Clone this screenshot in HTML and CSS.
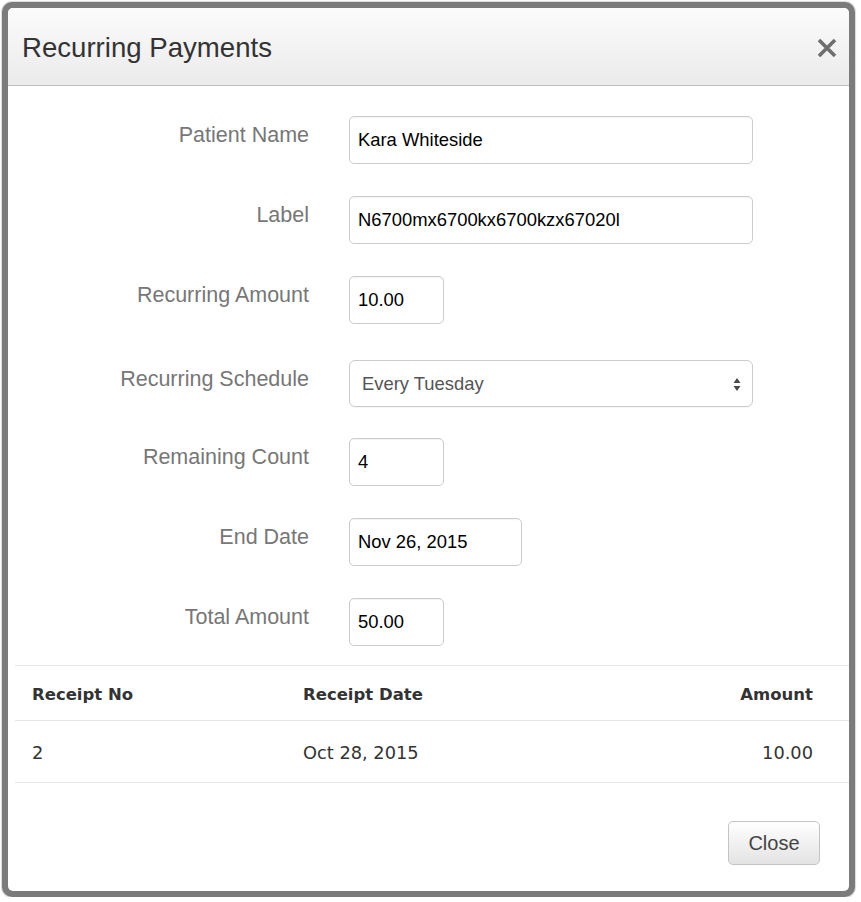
FILE: index.html
```html
<!DOCTYPE html>
<html>
<head>
<meta charset="utf-8">
<title>Recurring Payments</title>
<link rel="stylesheet" href="styles.css">
</head>
<body>
<div class="modal">
  <div class="modal-content">
    <div class="modal-header">
      <h4 class="modal-title">Recurring Payments</h4>
      <button class="close" type="button" aria-label="Close">
        <svg width="20" height="20" viewBox="0 0 20 20"><path d="M2 2 L18 18 M18 2 L2 18" stroke="#6e6e6e" stroke-width="3.6" stroke-linecap="butt"/></svg>
      </button>
    </div>
    <div class="modal-body">
      <div class="form">
        <div class="form-row">
          <label class="form-label">Patient Name</label>
          <div class="control w-full">Kara Whiteside</div>
        </div>
        <div class="form-row">
          <label class="form-label">Label</label>
          <div class="control w-full">N6700mx6700kx6700kzx67020l</div>
        </div>
        <div class="form-row">
          <label class="form-label">Recurring Amount</label>
          <div class="control w-small">10.00</div>
        </div>
        <div class="form-row form-row-select">
          <label class="form-label">Recurring Schedule</label>
          <div class="control select w-full">
            <span class="select-text">Every Tuesday</span>
            <svg class="select-arrows" width="8" height="15" viewBox="0 0 8 15"><path d="M4 1 L7.5 6 L0.5 6 Z M0.5 9 L7.5 9 L4 14 Z" fill="#4a4a4a"/></svg>
          </div>
        </div>
        <div class="form-row">
          <label class="form-label">Remaining Count</label>
          <div class="control w-small">4</div>
        </div>
        <div class="form-row">
          <label class="form-label">End Date</label>
          <div class="control w-date">Nov 26, 2015</div>
        </div>
        <div class="form-row">
          <label class="form-label">Total Amount</label>
          <div class="control w-small">50.00</div>
        </div>
      </div>
      <table class="receipts">
        <colgroup>
          <col class="col1">
          <col class="col2">
          <col class="col3">
        </colgroup>
        <thead>
          <tr>
            <th class="c1">Receipt No</th>
            <th class="c2">Receipt Date</th>
            <th class="c3">Amount</th>
          </tr>
        </thead>
        <tbody>
          <tr>
            <td class="c1">2</td>
            <td class="c2">Oct 28, 2015</td>
            <td class="c3">10.00</td>
          </tr>
        </tbody>
      </table>
    </div>
    <div class="modal-footer">
      <button class="btn" type="button">Close</button>
    </div>
  </div>
</div>
</body>
</html>
```

FILE: styles.css
```css
html, body {
  margin: 0;
  padding: 0;
  background: #ffffff;
}

body {
  font-family: "Liberation Sans", Arial, sans-serif;
}

.modal {
  margin: 2px 0 0 2px;
  width: 853px;
  height: 895px;
  box-sizing: border-box;
  border: 6px solid #7b7b7b;
  border-radius: 10px;
  box-shadow: 0 0 1px 1px rgba(0, 0, 0, 0.15);
  background: #7b7b7b;
}

.modal-content {
  height: 100%;
  background: #ffffff;
  border-radius: 5px;
  overflow: hidden;
  display: flex;
  flex-direction: column;
}

.modal-header {
  height: 77px;
  flex: none;
  display: flex;
  align-items: center;
  justify-content: space-between;
  padding: 0 12px 0 14px;
  background: linear-gradient(#fbfbfb, #ebebeb);
  border-bottom: 1px solid #bdbdbd;
}

.modal-title {
  margin: 0;
  font-size: 27.6px;
  font-weight: normal;
  color: #333333;
  line-height: 1;
  position: relative;
  top: 1px;
}

.close {
  border: 0;
  background: transparent;
  padding: 0;
  width: 20px;
  height: 20px;
  display: flex;
  position: relative;
  top: 1px;
}

.modal-body {
  flex: none;
}

.form {
  padding-top: 30px;
  display: flex;
  flex-direction: column;
  gap: 32px;
}

.form-row {
  display: grid;
  grid-template-columns: 301px 1fr;
  column-gap: 40px;
  align-items: start;
}

.form-row-select {
  margin-top: 4px;
  margin-bottom: -1px;
}

.form-label {
  text-align: right;
  font-size: 21.5px;
  line-height: 26px;
  padding-top: 6px;
  color: #777777;
}

.control {
  box-sizing: border-box;
  height: 48px;
  border: 1px solid #cccccc;
  border-radius: 5px;
  padding: 0 8px;
  display: flex;
  align-items: center;
  font-size: 18.4px;
  color: #000000;
  background: #ffffff;
  box-shadow: inset 0 1px 1px rgba(0, 0, 0, 0.05);
}

.w-full { width: 404px; }
.w-small { width: 95px; }
.w-date { width: 173px; }

.select {
  height: 47px;
  border-radius: 6px;
  padding: 0 11px 0 12px;
  justify-content: space-between;
  color: #555555;
  box-shadow: 0 1px 1px rgba(0, 0, 0, 0.04);
}

.select-arrows {
  flex: none;
  margin-top: 1px;
}

.receipts {
  margin: 19px 0 0 7px;
  width: 834px;
  table-layout: fixed;
  border-collapse: collapse;
  font-family: "DejaVu Sans", "Liberation Sans", sans-serif;
  color: #333333;
}

.receipts .col1 { width: 288px; }
.receipts .col2 { width: 300px; }

.receipts th,
.receipts td {
  padding: 0;
  text-align: left;
  vertical-align: middle;
}

.receipts th {
  font-size: 16.5px;
  font-weight: bold;
  height: 55px;
  border-top: 1px solid #e6e6e6;
  border-bottom: 1px solid #e6e6e6;
  padding-top: 3px;
  box-sizing: border-box;
}

.receipts td {
  font-size: 17.8px;
  height: 60px;
  border-bottom: 1px solid #e6e6e6;
  font-weight: normal;
  padding-top: 1px;
}

.receipts .c1 {
  padding-left: 17px;
}

.receipts .c3 {
  text-align: right;
  padding-right: 36px;
}

.modal-footer {
  display: flex;
  justify-content: flex-end;
  padding: 38px 29px 0 0;
}

.btn {
  width: 92px;
  height: 44px;
  box-sizing: border-box;
  border: 1px solid #c4c4c4;
  border-radius: 5px;
  background: linear-gradient(#ffffff, #e3e3e3);
  font-family: "Liberation Sans", Arial, sans-serif;
  font-size: 20px;
  color: #444444;
  padding: 0;
}
```
